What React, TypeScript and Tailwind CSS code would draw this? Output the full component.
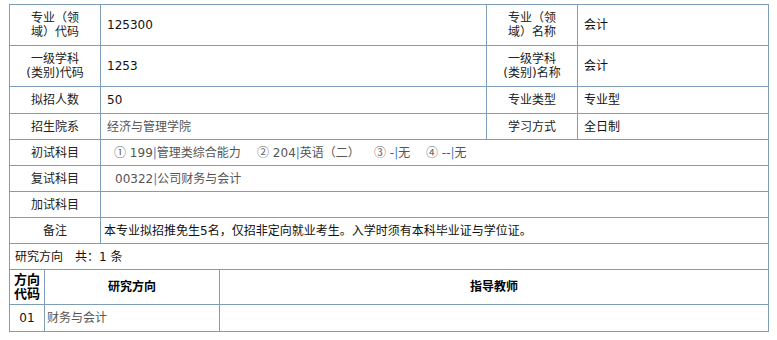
const line = 'border border-[#7f9db9]';
const label = `${line} text-center text-[#222] px-1`;
const value = `${line} text-left text-[#111] pl-[6px]`;

const exams = [
  { no: '①', code: '199', name: '管理类综合能力', w: 'w-[143px]' },
  { no: '②', code: '204', name: '英语（二）', w: 'w-[117px]' },
  { no: '③', code: '-', name: '无', w: 'w-[52px]' },
  { no: '④', code: '--', name: '无', w: 'w-[52px]' },
];

function Bar() {
  return <span className="text-[#4a7ebb]">|</span>;
}

export default function App() {
  return (
    <div className="bg-white w-[777px] h-[340px] pt-[4px] pl-[9px] font-['DejaVu_Sans','Noto_Sans_CJK_SC',sans-serif] text-[12px] leading-[14px]">
      <table className="w-[760px] table-fixed">
        <colgroup>
          <col className="w-[35px]" />
          <col className="w-[56px]" />
          <col className="w-[119px]" />
          <col className="w-[267px]" />
          <col className="w-[91px]" />
          <col className="w-[191px]" />
        </colgroup>
        <tbody>
          <tr className="h-[41px]">
            <td colSpan={2} className={label}>专业（领<br />域）代码</td>
            <td colSpan={2} className={value}>125300</td>
            <td className={label}>专业（领<br />域）名称</td>
            <td className={value}>会计</td>
          </tr>
          <tr className="h-[41px]">
            <td colSpan={2} className={label}>一级学科<br />(类别)代码</td>
            <td colSpan={2} className={value}>1253</td>
            <td className={label}>一级学科<br />(类别)名称</td>
            <td className={value}>会计</td>
          </tr>
          <tr className="h-[27px]">
            <td colSpan={2} className={label}>拟招人数</td>
            <td colSpan={2} className={value}>50</td>
            <td className={label}>专业类型</td>
            <td className={value}>专业型</td>
          </tr>
          <tr className="h-[26px]">
            <td colSpan={2} className={label}>招生院系</td>
            <td colSpan={2} className={`${value} !text-[#555]`}>经济与管理学院</td>
            <td className={label}>学习方式</td>
            <td className={value}>全日制</td>
          </tr>
          <tr className="h-[26px]">
            <td colSpan={2} className={label}>初试科目</td>
            <td colSpan={4} className={`${line} pl-[13px] text-[#555] whitespace-nowrap`}>
              {exams.map((e) => (
                <span key={e.no} className={`inline-block ${e.w}`}>
                  <span className="font-['Noto_Sans_CJK_SC',sans-serif] text-[#666]">{e.no}</span> {e.code}<Bar />{e.name}
                </span>
              ))}
            </td>
          </tr>
          <tr className="h-[26px]">
            <td colSpan={2} className={label}>复试科目</td>
            <td colSpan={4} className={`${line} pl-[14px] text-[#555]`}>
              00322<Bar />公司财务与会计
            </td>
          </tr>
          <tr className="h-[26px]">
            <td colSpan={2} className={label}>加试科目</td>
            <td colSpan={4} className={line}></td>
          </tr>
          <tr className="h-[26px]">
            <td colSpan={2} className={label}>备注</td>
            <td colSpan={4} className={`${line} pl-[3px] text-[#111]`}>
              本专业拟招推免生5名，仅招非定向就业考生。入学时须有本科毕业证与学位证。
            </td>
          </tr>
          <tr className="h-[26px]">
            <td colSpan={6} className={`${line} pl-[5px] text-[#111]`}>
              研究方向<span className="ml-[12px]">共：1 条</span>
            </td>
          </tr>
          <tr className="h-[35px] font-bold text-black">
            <td className={`${line} text-center text-[13px] leading-[14px]`}>方向<br />代码</td>
            <td colSpan={2} className={`${line} text-center`}>研究方向</td>
            <td colSpan={3} className={`${line} text-center`}>指导教师</td>
          </tr>
          <tr className="h-[27px]">
            <td className={`${line} text-center text-[#111]`}>01</td>
            <td colSpan={2} className={`${line} pl-[2px] text-[#555]`}>财务与会计</td>
            <td colSpan={3} className={line}></td>
          </tr>
        </tbody>
      </table>
    </div>
  );
}
